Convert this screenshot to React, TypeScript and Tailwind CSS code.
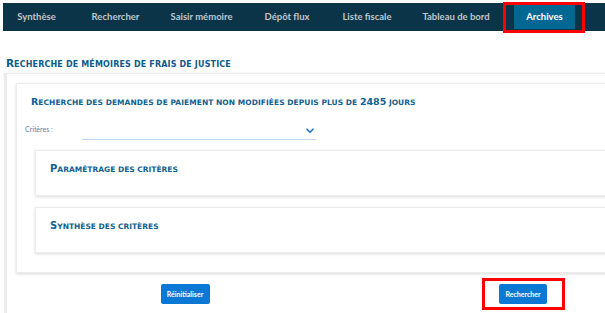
import React from "react";

const tabs = [
  { label: "Synthèse", w: "w-[67px]" },
  { label: "Rechercher", w: "w-[91px]" },
  { label: "Saisir mémoire", w: "w-[81px]" },
  { label: "Dépôt flux", w: "w-[90px]" },
  { label: "Liste fiscale", w: "w-[70px]" },
  { label: "Tableau de bord", w: "w-[108px]" },
];

const capsFont = { fontFamily: "'DejaVu Sans', 'Open Sans', sans-serif" };

export default function App() {
  return (
    <div
      className="relative w-[605px] h-[313px] overflow-hidden bg-white"
      style={{ fontFamily: "Lato, 'Open Sans', Arial, sans-serif" }}
    >
      {/* Nav */}
      <nav className="mt-[3px] ml-[3px] h-[28px] w-[602px] bg-[#0c3449] flex items-center">
        {tabs.map((t) => (
          <div
            key={t.label}
            className={`${t.w} flex justify-center text-[9.5px] font-bold text-[#bec7cd] whitespace-nowrap`}
          >
            {t.label}
          </div>
        ))}
        <div className="ml-[4px] w-[61px] h-[24px] bg-[#016894] flex items-center justify-center text-[9.5px] font-bold text-white">
          Archives
        </div>
      </nav>

      {/* Title */}
      <h1
        className="mt-[25px] ml-[6px] h-[12px] leading-[12px] font-bold text-[#0d5b8a] whitespace-nowrap"
        style={capsFont}
      >
        <span className="text-[10.5px]">R</span>
        <span className="text-[8px] uppercase tracking-[0.15px]">echerche de mémoires de frais de justice</span>
      </h1>

      {/* Outer container */}
      <div className="mt-[5px] ml-[4px] w-[720px] h-[300px] bg-white border-l-[3px] border-t border-[#ececec] shadow-[0_0_2px_rgba(0,0,0,0.08)] pl-[9px] pt-[9px]">
        {/* Inner card */}
        <div className="w-[690px] h-[190px] bg-white border border-[#ececec] shadow-[0_1px_3px_rgba(0,0,0,0.15)] pt-[10px]">
          <h2
            className="ml-[14px] h-[12px] leading-[12px] font-bold text-[#0f5f90] whitespace-nowrap"
            style={capsFont}
          >
            <span className="text-[9.5px]">R</span>
            <span className="text-[7.5px] uppercase tracking-[0.05px]">echerche des demandes de paiement non modifiées depuis plus de </span>
            <span className="text-[9.5px]">2485</span>
            <span className="text-[7.5px] uppercase"> jours</span>
          </h2>
          <div className="mt-[19px] flex items-start h-[15px]">
            <span className="ml-[8px] w-[57px] text-[7px] leading-[9px] text-[#4f88b8]">Critères :</span>
            <div className="w-[234px] h-[15px] border-b border-[#bcd6ef] flex justify-end pr-[2px]">
              <svg width="8" height="6" viewBox="0 0 8 6" className="mt-[3px]">
                <path d="M1 1.2 L4 4.2 L7 1.2" fill="none" stroke="#1a73c7" strokeWidth="1.6" strokeLinecap="round" strokeLinejoin="round" />
              </svg>
            </div>
          </div>
          <div className="ml-[18px] mt-[10px] w-[660px] h-[46px] bg-white border border-[#ececec] shadow-[0_1px_3px_rgba(0,0,0,0.15)] pl-[14px] pt-[10px]">
            <h3 className="h-[12px] leading-[12px] font-bold text-[#0f5f90] whitespace-nowrap" style={capsFont}>
              <span className="text-[10px]">P</span>
              <span className="text-[7.5px] uppercase">aramétrage des critères</span>
            </h3>
          </div>
          <div className="ml-[18px] mt-[11px] w-[660px] h-[46px] bg-white border border-[#ececec] shadow-[0_1px_3px_rgba(0,0,0,0.15)] pl-[14px] pt-[10px]">
            <h3 className="h-[12px] leading-[12px] font-bold text-[#0f5f90] whitespace-nowrap" style={capsFont}>
              <span className="text-[10px]">S</span>
              <span className="text-[7.5px] uppercase">ynthèse des critères</span>
            </h3>
          </div>
        </div>

        {/* Buttons */}
        <div className="mt-[11px] grid grid-cols-[338px_338px]">
          <div className="flex justify-center">
            <button className="w-[49px] h-[20px] rounded-[2px] bg-[#0a78d4] text-white text-[7px] font-bold">
              Réinitialiser
            </button>
          </div>
          <div className="flex justify-center">
            <button className="w-[48px] h-[20px] rounded-[2px] bg-[#0a78d4] text-white text-[7px] font-bold">
              Rechercher
            </button>
          </div>
        </div>
      </div>

      {/* Red annotation boxes */}
      <div className="absolute left-[503px] top-[2px] w-[82px] h-[31px] border-[3px] border-[#ff0000] pointer-events-none" />
      <div className="absolute left-[482px] top-[278px] w-[83px] h-[32px] border-[3px] border-[#ff0000] pointer-events-none" />
    </div>
  );
}
